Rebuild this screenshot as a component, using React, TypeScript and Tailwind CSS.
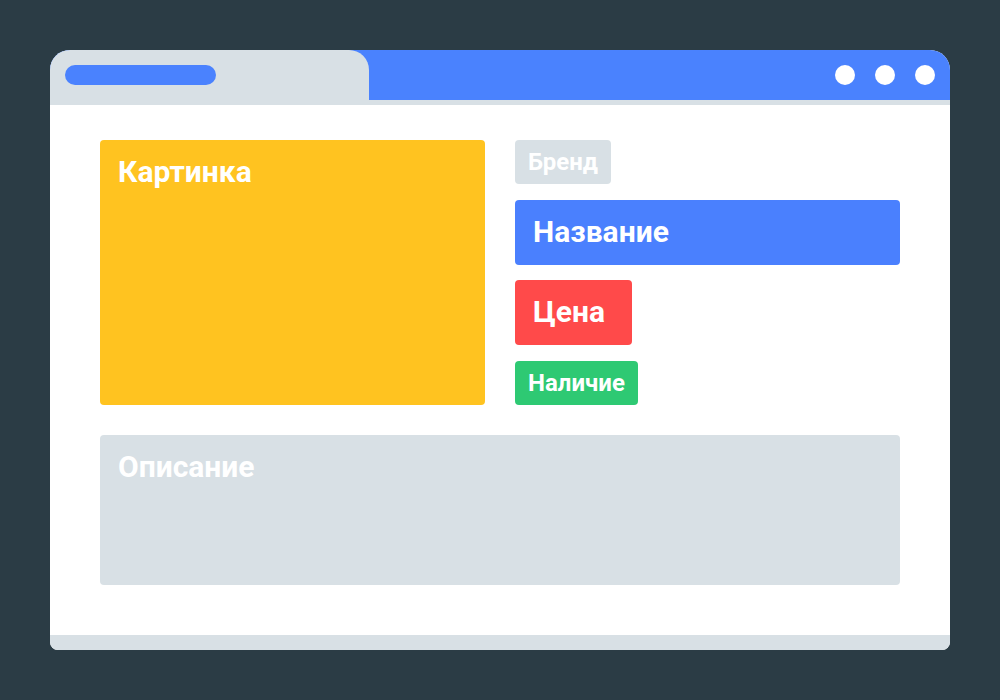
const font = { fontFamily: "Roboto, 'Noto Sans', sans-serif" };

function Block({
  label,
  className,
  size = "big",
}: {
  label: string;
  className: string;
  size?: "big" | "small";
}) {
  return (
    <div
      className={`rounded-[4px] text-white font-bold ${
        size === "big"
          ? "px-[18px] pt-[13px] text-[30px] leading-[38px]"
          : "px-[13px] pt-[7px] text-[24px] leading-[30px]"
      } ${className}`}
    >
      {label}
    </div>
  );
}

export default function App() {
  return (
    <div
      className="flex h-[700px] w-[1000px] items-start justify-center bg-[#2b3c45] pt-[50px]"
      style={font}
    >
      <div className="flex h-[600px] w-[900px] flex-col overflow-hidden rounded-b-[8px] rounded-t-[20px] bg-white">
        {/* browser chrome */}
        <div className="flex h-[50px] bg-[#4a82fe]">
          <div className="flex h-[50px] w-[319px] items-start rounded-tr-[20px] bg-[#d8e0e5] pl-[15px] pt-[15px]">
            <div className="h-[20px] w-[151px] rounded-full bg-[#4a82fe]" />
          </div>
          <div className="flex flex-1 items-center justify-end gap-[20px] pr-[15px]">
            <span className="h-[20px] w-[20px] rounded-full bg-white" />
            <span className="h-[20px] w-[20px] rounded-full bg-white" />
            <span className="h-[20px] w-[20px] rounded-full bg-white" />
          </div>
        </div>
        <div className="h-[5px] bg-[#d8e0e5]" />

        {/* page body */}
        <div className="flex flex-1 flex-col gap-[30px] px-[50px] pb-[50px] pt-[35px]">
          <div className="grid h-[265px] grid-cols-2 gap-[30px]">
            <Block label="Картинка" className="bg-[#ffc320]" />
            <div className="flex flex-col items-start justify-between">
              <Block label="Бренд" size="small" className="h-[44px] bg-[#d8e0e5]" />
              <Block label="Название" className="h-[65px] w-full bg-[#4a80fe]" />
              <Block label="Цена" className="h-[65px] w-[117px] bg-[#ff4a4a]" />
              <Block label="Наличие" size="small" className="h-[44px] bg-[#2ec973]" />
            </div>
          </div>
          <Block label="Описание" className="h-[150px] bg-[#d8e0e5]" />
        </div>

        <div className="h-[15px] bg-[#d8e0e5]" />
      </div>
    </div>
  );
}
